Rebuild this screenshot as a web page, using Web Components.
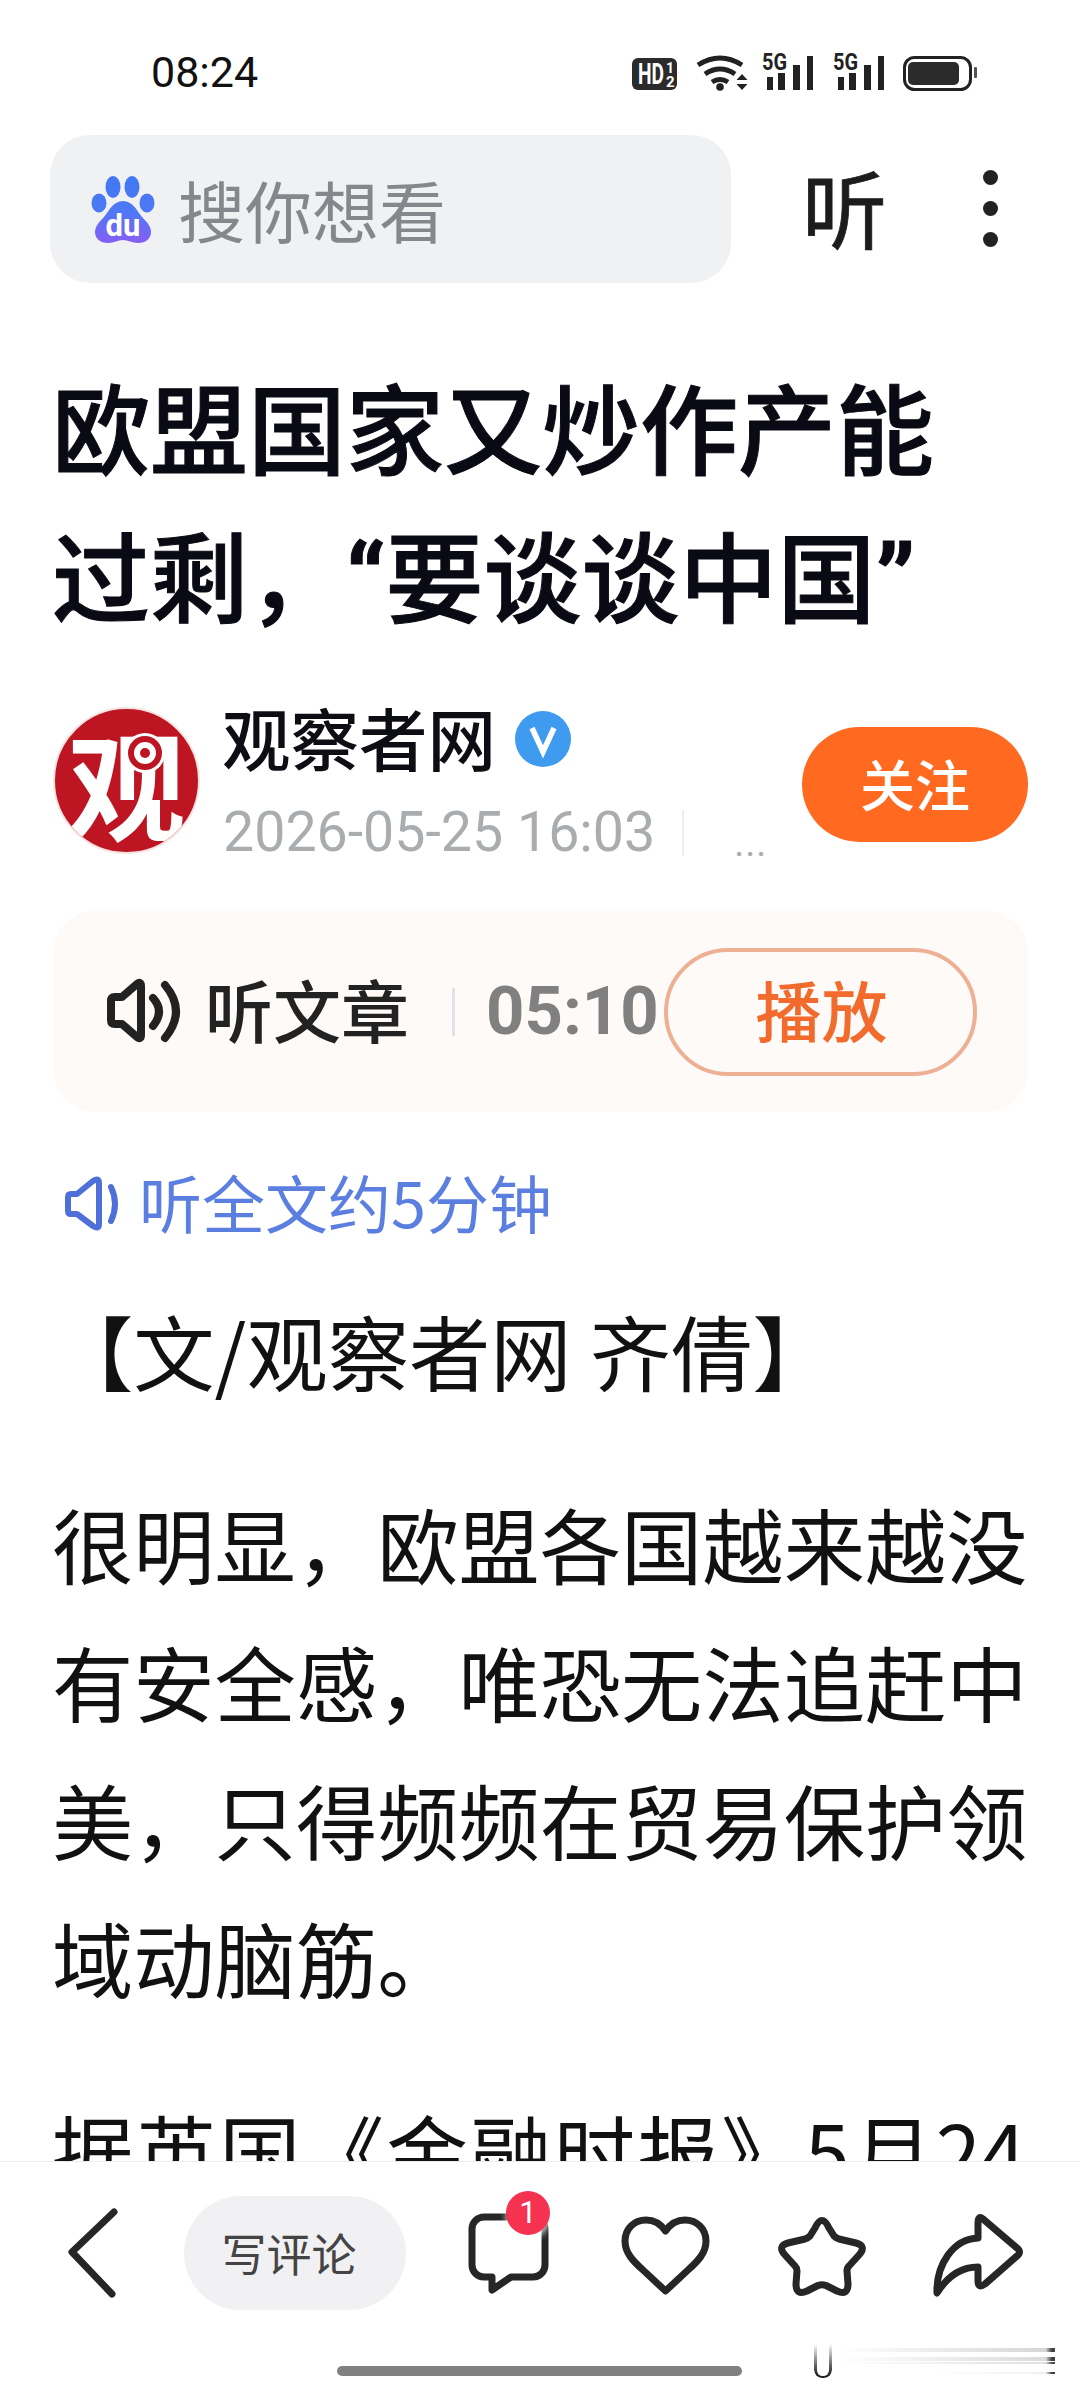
<!DOCTYPE html>
<html lang="zh-Hans">
<head>
<meta charset="utf-8">
<title>欧盟国家又炒作产能过剩</title>
<style>
html,body{margin:0;padding:0;background:#fff;height:2400px;overflow:hidden}
body{position:relative;width:1080px;font-family:"Noto Sans CJK SC","Noto Sans",Roboto,sans-serif;color:#111}
</style>
</head>
<body>
<status-bar></status-bar>
<search-row></search-row>
<article-title>欧盟国家又炒作产能<br>过剩，<q-mark>“</q-mark>要谈谈中国<q-mark>”</q-mark></article-title>
<author-row></author-row>
<audio-card></audio-card>
<listen-link>听全文约5分钟</listen-link>
<article-body>
  <p-block>【文/观察者网 齐倩】</p-block>
  <p-block>很明显，欧盟各国越来越没有安全感，唯恐无法追赶中美，只得频频在贸易保护领域动脑筋。</p-block>
  <p-block last>据英国《金融时报》5月24</p-block>
</article-body>
<bottom-bar></bottom-bar>

<script>
const CJK = '"Noto Sans CJK SC","Noto Sans",sans-serif';
function def(name, html){
  customElements.define(name, class extends HTMLElement{
    constructor(){super();this.attachShadow({mode:'open'}).innerHTML=html;}
  });
}

def('status-bar',`<style>
:host{display:flex;height:135px;box-sizing:border-box;padding-left:151px;position:relative}
.t{font:400 43px/1 Roboto,sans-serif;color:#111;margin-top:51px;width:479px;height:43px}
svg{display:block;margin-top:40px}
text{font-family:Roboto,sans-serif;font-weight:700}
</style>
<div class="t">08:24</div>
<svg width="350" height="52" viewBox="0 -12 350 52">
  <rect x="2" y="6" width="45" height="32" rx="6" fill="#2b2b2b"/>
  <text x="8" y="32" font-size="29" fill="#fff" textLength="26" lengthAdjust="spacingAndGlyphs">HD</text>
  <text x="36" y="21" font-size="14" fill="#fff">1</text>
  <text x="36" y="35" font-size="15" fill="#fff">2</text>
  <g fill="none" stroke="#222" stroke-width="5">
    <path d="M68 13Q90-1 112 13"/><path d="M75 22Q90 12 105 22"/><path d="M82 30Q90 25 98 30"/>
  </g>
  <circle cx="90" cy="35" r="3.800" fill="#222"/>
  <path d="M112 22l5.500 6h-11zM106.500 32h11l-5.500 6z" fill="#222"/>
  <g fill="#222">
    <text x="132" y="18" font-size="23" textLength="25" lengthAdjust="spacingAndGlyphs">5G</text>
    <rect x="137" y="25" width="6" height="13"/><rect x="148" y="21" width="7" height="17"/><rect x="163" y="13" width="7" height="25"/><rect x="177" y="4" width="6" height="34"/>
    <text x="203" y="18" font-size="23" textLength="25" lengthAdjust="spacingAndGlyphs">5G</text>
    <rect x="208" y="25" width="6" height="13"/><rect x="219" y="21" width="7" height="17"/><rect x="234" y="13" width="7" height="25"/><rect x="248" y="4" width="6" height="34"/>
  </g>
  <rect x="274.500" y="5.500" width="66" height="32" rx="10" fill="none" stroke="#222" stroke-width="3"/>
  <rect x="278" y="10" width="51" height="23" rx="5" fill="#2b2b2b"/>
  <rect x="344" y="15" width="3" height="11" rx="1" fill="#555"/>
</svg>`);

def('search-row',`<style>
:host{display:flex;align-items:center;height:148px;padding-left:50px;font-family:${CJK}}
.box{width:681px;height:148px;border-radius:40px;background:#f0f1f3;display:flex;align-items:center;box-sizing:border-box;padding-left:38px}
.box svg{display:block;flex:none}
.box span{font-size:67px;line-height:1;color:#85878d;margin-left:20px;position:relative;top:-1px}
.listen{font-size:85px;line-height:1;color:#1c1c1c;margin-left:71px;font-weight:400;-webkit-text-stroke:.8px #1c1c1c;margin-top:-8px}
.dots{margin-left:96px;display:flex;flex-direction:column;gap:16px;margin-top:-1px}
.dots i{display:block;width:15px;height:15px;border-radius:50%;background:#222}
</style>
<div class="box">
  <svg width="70" height="76" viewBox="0 0 70 76">
    <defs><linearGradient id="g" gradientUnits="userSpaceOnUse" x1="0" y1="0" x2="0" y2="74"><stop offset="0" stop-color="#3f78f2"/><stop offset=".55" stop-color="#4f78f5"/><stop offset="1" stop-color="#8a5cf6"/></linearGradient></defs>
    <g fill="url(#g)">
      <ellipse cx="25" cy="16" rx="7.500" ry="11"/><ellipse cx="44" cy="16" rx="7.500" ry="11"/>
      <ellipse cx="11" cy="32" rx="7.500" ry="9.500"/><ellipse cx="59" cy="32" rx="7.500" ry="9.500"/>
      <path d="M35 30C45 30 49 40 54 46C60 52 63 56 63 61C63 69 56 72 50 72C44 72 40 69 35 69C30 69 26 72 20 72C14 72 7 69 7 61C7 56 10 52 16 46C21 40 25 30 35 30Z"/>
    </g>
    <text x="35" y="65" font-family="Roboto,sans-serif" font-weight="700" font-size="31" fill="#fff" text-anchor="middle">du</text>
  </svg>
  <span>搜你想看</span>
</div>
<div class="listen">听</div>
<div class="dots"><i></i><i></i><i></i></div>`);

def('q-mark',`<style>:host{font-family:Roboto,sans-serif;font-weight:700}</style><slot></slot>`);

def('article-title',`<style>
:host{display:block;margin:67px 0 0 52px;font:500 98px/148px ${CJK};color:#0a0a14;white-space:nowrap;-webkit-text-stroke:1px #0a0a14}
</style><slot></slot>`);

def('author-row',`<style>
:host{display:flex;margin:51px 52px 0 53px;height:147px;position:relative;font-family:${CJK}}
.av{position:relative;width:147px;height:147px;border-radius:50%;background:#bd1622;overflow:hidden;flex:none;box-sizing:border-box;border:2px solid #f7e4e2}
.av b{position:absolute;left:0;right:0;top:0;bottom:0;display:flex;align-items:center;justify-content:center;color:#fff;font-size:118px;line-height:1;font-weight:700}
.av svg{position:absolute;left:0;top:0}
.info{margin-left:22px;flex:1;min-width:0}
.name{display:flex;align-items:center;height:70px;margin-top:-5px;font-size:68.500px;font-weight:500;line-height:70px;color:#0d0d14}
.name svg{margin-left:19px;display:block;position:relative;top:2px}
.meta{display:flex;align-items:center;margin-top:36px;margin-left:1px;height:50px;font:400 55.500px/50px Roboto,sans-serif;color:#a9adb0;white-space:nowrap}
.meta i{display:block;width:2px;height:46px;background:#eee;margin:0 50px 0 27px}
.meta span{font-size:38px;letter-spacing:1px;align-self:flex-end;line-height:30px;margin-top:10px}
.btn{width:226px;height:115px;margin-top:20px;border-radius:58px;background:#ff6a20;color:#fff;font-size:55px;font-weight:500;line-height:110px;text-align:center;flex:none}
</style>
<div class="av"><b>观</b>
  <svg width="143" height="143" viewBox="0 0 143 143"><circle cx="90" cy="44" r="20" fill="#fff"/><circle cx="90" cy="44" r="14" fill="none" stroke="#bd1622" stroke-width="6"/><circle cx="90" cy="44" r="5" fill="#bd1622"/></svg>
</div>
<div class="info">
  <div class="name">观察者网<svg width="56" height="56" viewBox="0 0 56 56"><circle cx="28" cy="28" r="28" fill="#3f9bf0"/><path d="M17 17L28 41L39 17" fill="none" stroke="#fff" stroke-width="5.500"/></svg></div>
  <div class="meta">2026-05-25 16:03<i></i><span>...</span></div>
</div>
<div class="btn">关注</div>`);

def('audio-card',`<style>
:host{display:flex;align-items:center;margin:57px 52px 0 53px;height:201px;border-radius:42px;background:#fdfaf7;font-family:${CJK}}
svg{display:block;margin-left:44px;flex:none}
.t{font-size:68px;font-weight:500;color:#222;line-height:1;margin-left:18px;margin-top:-6px}
i{display:block;width:3px;height:48px;background:#dfe2ea;margin:0 31px 0 43px}
.d{font:700 67px/1 Roboto,sans-serif;color:#808080;width:178px}
.b{box-sizing:border-box;width:313px;height:128px;border:4px solid #eeb094;border-radius:64px;color:#f26a2c;font-size:66px;font-weight:500;line-height:112px;text-align:center;padding-left:2px}
</style>
<svg width="90" height="85" viewBox="0 0 90 85" fill="none" stroke="#222" stroke-width="8" stroke-linejoin="round" stroke-linecap="round">
  <path d="M18 28H25L40 15Q44 12 44 17V66Q44 71 40 68L25 55H18Q14 55 14 51V32Q14 28 18 28Z"/>
  <path d="M56 29Q68 42 56 57"/><path d="M68 16Q90 42 68 69"/>
</svg>
<div class="t">听文章</div><i></i><div class="d">05:10</div><div class="b">播放</div>`);

def('listen-link',`<style>
:host{display:flex;align-items:center;margin:54px 0 0 59px;height:70px;font:400 63px/70px ${CJK};color:#5b7fe0}
svg{display:block;margin-right:10px;flex:none;position:relative;top:3px}
</style>
<svg width="70" height="70" viewBox="0 0 70 70" fill="none" stroke="#4f70d8" stroke-width="6" stroke-linejoin="round" stroke-linecap="round">
  <path d="M12 25H18L34 12Q40 8 40 14V55Q40 61 34 57L18 45H12Q9 45 9 42V28Q9 25 12 25Z"/><path d="M52 18Q60 35 52 52"/>
</svg><slot></slot>`);

def('article-body',`<style>
:host{display:flex;flex-direction:column;gap:55px;margin:45px 46px 0 52px;font:400 81.300px/138px ${CJK};color:#111}
</style><slot></slot>`);

def('p-block',`<style>
:host{display:block}
:host([last]){text-align:justify;text-align-last:justify;margin-right:8px}
</style><slot></slot>`);

def('bottom-bar',`<style>
:host{position:absolute;left:0;right:0;top:2161px;bottom:0;background:#fff;border-top:1px solid #ececec;display:block;box-sizing:border-box;overflow:hidden;font-family:${CJK}}
.row{display:flex;align-items:flex-start;padding:34px 0 0 60px}
svg{display:block;flex:none;margin-top:9px}
.s{fill:none;stroke:#262626;stroke-width:7;stroke-linejoin:round;stroke-linecap:round}
.pill{box-sizing:border-box;padding-right:12px;width:222px;height:114px;border-radius:57px;background:#f1f1f3;color:#444;font-size:45px;line-height:114px;text-align:center;margin-left:64px;flex:none}
.c{position:relative;width:100px;height:100px;margin-left:54px;flex:none}
.badge{position:absolute;left:46px;top:-5px;width:44px;height:44px;border-radius:50%;background:#f5324f;color:#fff;font:400 31px/44px Roboto,sans-serif;text-align:center;box-shadow:0 4px 6px rgba(255,255,255,.8)}
.home{width:405px;height:10px;border-radius:5px;background:#808080;margin:56px 0 0 337px}
.ghost{position:absolute;left:745px;top:180px;width:310px;height:36px;
 background:
  linear-gradient(90deg,transparent 30%,rgba(0,0,0,.16) 97%,rgba(0,0,0,.75) 99%) 0 6px/100% 4px no-repeat,
  linear-gradient(90deg,transparent 30%,rgba(0,0,0,.14) 97%,rgba(0,0,0,.75) 99%) 0 15px/100% 4px no-repeat,
  linear-gradient(90deg,transparent 30%,rgba(0,0,0,.12) 97%,rgba(0,0,0,.7) 99%) 0 20px/100% 2px no-repeat,
  linear-gradient(90deg,transparent 60%,rgba(0,0,0,.06) 97%,rgba(0,0,0,.75) 99%) 0 30px/100% 2px no-repeat}
.u{position:absolute;left:814px;top:182px;width:18px;height:34px;box-sizing:border-box;border:solid #222;border-width:0 3px 2px 3px;border-radius:0 0 8px 8px;
 -webkit-mask:linear-gradient(180deg,transparent,#000 90%);mask:linear-gradient(180deg,transparent,#000 90%)}
</style>
<div class="row">
  <svg width="60" height="100" viewBox="0 0 60 100" class="s"><path d="M54 7L12 47L52 89"/></svg>
  <div class="pill">写评论</div>
  <div class="c">
    <svg width="100" height="100" viewBox="0 0 100 100" class="s" style="margin:0;position:absolute;top:9px"><path d="M24 12H73a12 12 0 0 1 12 12V60a12 12 0 0 1-12 12H51L32 85V72H24a12 12 0 0 1-12-12V24a12 12 0 0 1 12-12Z"/></svg>
    <div class="badge">1</div>
  </div>
  <svg width="100" height="100" viewBox="0 0 100 100" class="s" style="margin-left:55px"><path d="M50.500 26C45 18 38 15 31 15C19 15 10 24 10 36C10 48 18 56 28 65L50.500 86L73 65C83 56 91 48 91 36C91 24 82 15 70 15C63 15 56 18 50.500 26Z"/></svg>
  <svg width="100" height="100" viewBox="0 0 100 100" class="s" style="margin-left:57px"><path d="M43 23Q50 8 57 23L62 31Q64 33 67 34L84 38Q95 41 87 50L77 61Q75 63 75 66L76 79Q76 91 65 86L54 80.500Q50 79 46 80.500L35 86Q24 91 24 79L25 66Q25 63 23 61L13 50Q5 41 16 38L33 34Q36 33 38 31Z"/></svg>
  <svg width="100" height="100" viewBox="0 0 100 100" class="s" style="margin-left:53px"><path d="M58 14L92 43Q97 47 92 51L60 79Q53 84 53 76V62C36 62 22 72 12 88C11 60 28 34 53 33V18Q53 10 58 14Z"/></svg>
</div>
<div class="home"></div>
<div class="ghost"></div><div class="u"></div>`);
</script>
</body>
</html>
